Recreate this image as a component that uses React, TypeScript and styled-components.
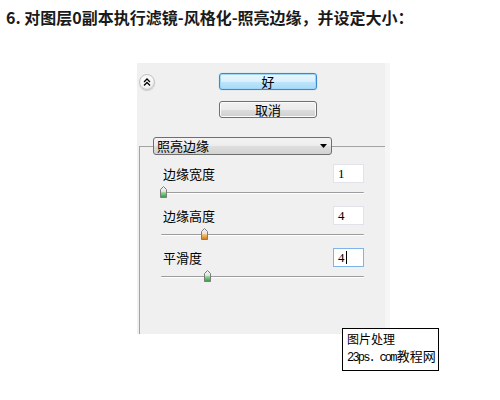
import React from "react";
import styled, { createGlobalStyle } from "styled-components";

const Global = createGlobalStyle`
  html, body { margin: 0; padding: 0; background: #ffffff; }
  body { font-family: "Noto Sans CJK SC", "Liberation Sans", sans-serif; }
`;

const Page = styled.div`
  position: relative;
  width: 500px;
  height: 400px;
  display: flex;
  flex-direction: column;
  overflow: hidden;
`;

const Title = styled.h1`
  margin: 0;
  padding: 7px 0 0 6px;
  font-size: 16px;
  line-height: 20px;
  font-weight: 700;
  color: #1a1a1a;
  font-family: "Noto Sans CJK SC", "Liberation Sans", sans-serif;
`;

const Panel = styled.div`
  margin: 36px 0 0 137px;
  width: 253px;
  height: 271px;
  background: #f0f0f0;
  box-sizing: border-box;
  border-right: 5px solid #f6f6f6;
  overflow: hidden;
  display: flex;
  flex-direction: column;
`;

const TopBar = styled.div`
  display: flex;
  align-items: flex-start;
  padding: 10px 0 0 2px;
`;

const RoundButton = styled.div`
  width: 16px;
  height: 16px;
  margin-top: 1px;
  box-sizing: border-box;
  border-radius: 50%;
  border: 1px solid #c4c4c4;
  background: radial-gradient(circle at 45% 40%, #ffffff 0%, #f4f4f4 55%, #d6d6d6 100%);
  box-shadow: 0 1px 1px rgba(0, 0, 0, 0.15);
  display: flex;
  align-items: center;
  justify-content: center;
`;

const ButtonColumn = styled.div`
  display: flex;
  flex-direction: column;
  gap: 11px;
  margin-left: 64px;
`;

const DialogButton = styled.div<{ $primary?: boolean }>`
  width: 98px;
  height: 17px;
  box-sizing: border-box;
  border-radius: 3px;
  border: 1px solid ${(p) => (p.$primary ? "#3c8ac9" : "#707070")};
  background: ${(p) =>
    p.$primary
      ? "linear-gradient(#eaf6fd 0%, #d9f0fc 50%, #bee6fd 51%, #a7d9f5 100%)"
      : "linear-gradient(#f2f2f2 0%, #ebebeb 50%, #dddddd 51%, #cfcfcf 100%)"};
  box-shadow: ${(p) => (p.$primary ? "inset 0 0 0 1px #9fd6f5, 0 0 1px #7fc4ee" : "inset 0 0 0 1px #fcfcfc")};
  display: flex;
  align-items: center;
  justify-content: center;
  font-size: 13px;
  line-height: 15px;
  color: #000;
`;

const Group = styled.fieldset`
  margin: 19px 0 0 2px;
  padding: 0 0 0 13px;
  width: 248px;
  min-height: 240px;
  box-sizing: border-box;
  border: none;
  border-top: 1px solid #a3a3a3;
  border-left: 1px solid #a3a3a3;
  min-inline-size: 0;
`;

const Legend = styled.legend`
  padding: 0;
  margin: 0;
`;

const Select = styled.div`
  width: 179px;
  height: 18px;
  box-sizing: border-box;
  border: 1px solid #6f6f6f;
  border-radius: 3px;
  background: linear-gradient(#f4f4f4 0%, #ececec 50%, #dedede 51%, #d2d2d2 100%);
  display: flex;
  align-items: center;
  justify-content: space-between;
  padding: 0 4px 0 3px;
  font-size: 13px;
  line-height: 16px;
  color: #000;
`;

const Controls = styled.div`
  margin: 9px 0 0 8px;
  width: 203px;
  display: flex;
  flex-direction: column;
`;

const Setting = styled.div`
  display: flex;
  flex-direction: column;
  margin-bottom: 5px;
`;

const SettingRow = styled.div`
  height: 19px;
  display: flex;
  align-items: center;
  justify-content: space-between;
`;

const Label = styled.span`
  padding-left: 2px;
  font-size: 13px;
  line-height: 16px;
  color: #000;
`;

const Field = styled.div<{ $focused?: boolean }>`
  width: 31px;
  height: 19px;
  box-sizing: border-box;
  background: #fff;
  border: 1px solid ${(p) => (p.$focused ? "#7eb4ea" : "#e2e3ea")};
  display: flex;
  align-items: center;
  padding-left: 4px;
  font-family: "Liberation Serif", "DejaVu Serif", serif;
  font-size: 13px;
  color: #000;
`;

const Caret = styled.span`
  display: inline-block;
  width: 1px;
  height: 13px;
  background: #000;
  margin-left: 1px;
`;

const SliderArea = styled.div`
  position: relative;
  height: 18px;
`;

const Track = styled.div`
  position: absolute;
  left: 0;
  right: 0;
  top: 9px;
  height: 2px;
  box-sizing: border-box;
  border-top: 1px solid #9c9c9c;
  border-bottom: 1px solid #ffffff;
  border-radius: 1px;
`;

const Thumb = styled.svg`
  position: absolute;
  top: 3px;
  margin-left: -1px;
`;

const Watermark = styled.div`
  position: absolute;
  left: 342px;
  top: 328px;
  width: 97px;
  height: 43px;
  box-sizing: border-box;
  border: 1px solid #000;
  background: #fff;
  padding: 2px 0 0 4px;
  display: flex;
  flex-direction: column;
  white-space: nowrap;
`;

const WmTop = styled.div`
  font-size: 12px;
  line-height: 15px;
  color: #000;
`;

const WmBottom = styled.div`
  display: flex;
  align-items: baseline;
  white-space: nowrap;
`;

const WmDomain = styled.span`
  flex-shrink: 0;
  font-family: "Liberation Mono", "DejaVu Sans Mono", monospace;
  font-size: 12px;
  letter-spacing: -1.8px;
  color: #000;
`;

const WmBrand = styled.span`
  flex-shrink: 0;
  font-size: 13px;
  line-height: 19px;
  color: #000;
  margin-left: 1px;
`;

type SliderSetting = {
  label: string;
  value: number;
  min: number;
  max: number;
  tone: "green" | "orange";
  focused?: boolean;
};

const settings: SliderSetting[] = [
  { label: "边缘宽度", value: 1, min: 1, max: 14, tone: "green" },
  { label: "边缘高度", value: 4, min: 0, max: 20, tone: "orange" },
  { label: "平滑度", value: 4, min: 1, max: 15, tone: "green", focused: true },
];

const ThumbIcon: React.FC<{ tone: "green" | "orange"; left: number; id: string }> = ({ tone, left, id }) => {
  const low = tone === "green" ? "#2f9a3f" : "#c97a1a";
  const mid = tone === "green" ? "#8fd98f" : "#f4c27a";
  return (
    <Thumb width="7" height="12" viewBox="0 0 7 12" style={{ left: `${left}%` }}>
      <defs>
        <linearGradient id={id} x1="0" y1="0" x2="0" y2="1">
          <stop offset="0%" stopColor="#f6f6f6" />
          <stop offset="45%" stopColor="#e4e4e4" />
          <stop offset="55%" stopColor={mid} />
          <stop offset="100%" stopColor={low} />
        </linearGradient>
      </defs>
      <polygon
        points="3.5,0.5 6.5,3.5 6.5,11.5 0.5,11.5 0.5,3.5"
        fill={`url(#${id})`}
        stroke="#7c7c7c"
        strokeWidth="1"
      />
    </Thumb>
  );
};

export default function App() {
  return (
    <>
      <Global />
      <Page>
        <Title>6. 对图层0副本执行滤镜-风格化-照亮边缘，并设定大小：</Title>
        <Panel>
          <TopBar>
            <RoundButton>
              <svg width="8" height="8" viewBox="0 0 8 8">
                <polyline points="1,4 4,1 7,4" fill="none" stroke="#000" strokeWidth="1.3" />
                <polyline points="1,7.5 4,4.5 7,7.5" fill="none" stroke="#000" strokeWidth="1.3" />
              </svg>
            </RoundButton>
            <ButtonColumn>
              <DialogButton $primary>好</DialogButton>
              <DialogButton>取消</DialogButton>
            </ButtonColumn>
          </TopBar>
          <Group>
            <Legend>
              <Select>
                <span>照亮边缘</span>
                <svg width="7" height="4" viewBox="0 0 7 4">
                  <polygon points="0,0 7,0 3.5,4" fill="#000" />
                </svg>
              </Select>
            </Legend>
            <Controls>
              {settings.map((s, i) => {
                const pct = ((s.value - s.min) / (s.max - s.min)) * 100;
                return (
                  <Setting key={s.label}>
                    <SettingRow>
                      <Label>{s.label}</Label>
                      <Field $focused={s.focused}>
                        {s.value}
                        {s.focused && <Caret />}
                      </Field>
                    </SettingRow>
                    <SliderArea>
                      <Track />
                      <ThumbIcon tone={s.tone} left={pct} id={`thumb-${i}`} />
                    </SliderArea>
                  </Setting>
                );
              })}
            </Controls>
          </Group>
        </Panel>
        <Watermark>
          <WmTop>图片处理</WmTop>
          <WmBottom>
            <WmDomain>23ps. com</WmDomain>
            <WmBrand>教程网</WmBrand>
          </WmBottom>
        </Watermark>
      </Page>
    </>
  );
}
